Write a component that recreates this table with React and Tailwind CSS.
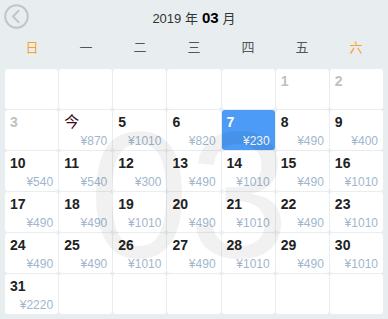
import React from "react";

const days = [
  null, null, null, null, null, { d: "1", past: true }, { d: "2", past: true },
  { d: "3", past: true }, { d: "今", p: "870", today: true }, { d: "5", p: "1010" }, { d: "6", p: "820" }, { d: "7", p: "230", sel: true }, { d: "8", p: "490" }, { d: "9", p: "400" },
  { d: "10", p: "540" }, { d: "11", p: "540" }, { d: "12", p: "300" }, { d: "13", p: "490" }, { d: "14", p: "1010" }, { d: "15", p: "490" }, { d: "16", p: "1010" },
  { d: "17", p: "490" }, { d: "18", p: "490" }, { d: "19", p: "1010" }, { d: "20", p: "490" }, { d: "21", p: "1010" }, { d: "22", p: "490" }, { d: "23", p: "1010" },
  { d: "24", p: "490" }, { d: "25", p: "490" }, { d: "26", p: "1010" }, { d: "27", p: "490" }, { d: "28", p: "1010" }, { d: "29", p: "490" }, { d: "30", p: "1010" },
  { d: "31", p: "2220" }, null, null, null, null, null, null,
];

const weeks = ["日", "一", "二", "三", "四", "五", "六"];

export default function App() {
  return (
    <div
      className="w-[388px] h-[319px] bg-[#e8eeef] overflow-hidden"
      style={{ fontFamily: '"Liberation Sans", Arial, "Noto Sans CJK SC", sans-serif' }}
    >
      <div className="grid grid-cols-[1fr_auto_1fr] items-center h-[34px] px-[4px]">
        <div className="flex items-center">
          <svg width="25" height="25" viewBox="0 0 25 25" className="mt-[-2px]">
            <circle cx="12.5" cy="12.5" r="11.3" fill="none" stroke="#c2c6c9" strokeWidth="2" />
            <path d="M14.6 6.8 L9 12.5 L14.6 18.2" fill="none" stroke="#c2c6c9" strokeWidth="2" strokeLinecap="round" strokeLinejoin="round" />
          </svg>
        </div>
        <div className="text-[13px] text-[#333] flex items-baseline pt-[2px]">
          <span>2019 年</span>
          <span className="font-bold text-[15px] text-black mx-[4px]">03</span>
          <span>月</span>
        </div>
        <div />
      </div>
      <div className="grid grid-cols-7 h-[26px] items-center px-[5px] mt-[1px]">
        {weeks.map((w, i) => (
          <div
            key={w}
            className={`text-center text-[13px] ${i === 0 || i === 6 ? "text-[#ff9d2e]" : "text-[#555]"}`}
          >
            {w}
          </div>
        ))}
      </div>
      <div className="relative mt-[8px] px-[5px]">
        <div className="grid grid-cols-7 gap-[1px] auto-rows-[40px]">
          {days.map((c, i) => {
            if (!c) return <div key={i} className="bg-white rounded-[3px]" />;
            return (
              <div
                key={i}
                className={`rounded-[3px] flex flex-col justify-between px-[5px] pt-[2px] pb-[2px] ${c.sel ? "bg-[#4c9bf7]" : "bg-white"}`}
              >
                <div
                  className={`leading-[20px] ${
                    c.sel
                      ? "text-white font-bold text-[14px]"
                      : c.past
                      ? "text-[#c0c0c0] font-bold text-[14px]"
                      : c.today
                      ? "text-[#3a0a1e] text-[15px]"
                      : "text-[#222] font-bold text-[14px]"
                  }`}
                >
                  {c.d}
                </div>
                {c.p && (
                  <div className={`text-right text-[12px] leading-[14px] ${c.sel ? "text-white" : "text-[#9fb6cd]"}`}>
                    ¥{c.p}
                  </div>
                )}
              </div>
            );
          })}
        </div>
        <div
          aria-hidden="true"
          className="absolute left-0 right-0 top-[36px] text-center pointer-events-none select-none text-[180px] leading-[180px] text-black/[0.055] pr-[10px]"
        >
          03
        </div>
      </div>
    </div>
  );
}
